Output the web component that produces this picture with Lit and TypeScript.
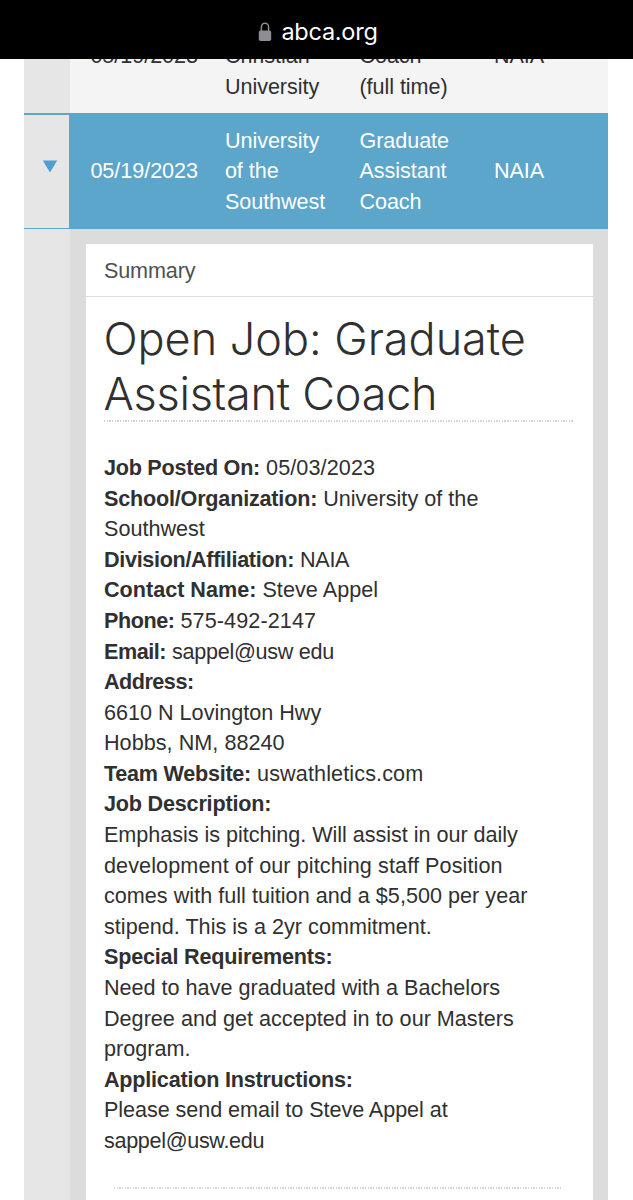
import { LitElement, html, css, svg } from "lit";
import { customElement } from "lit/decorators.js";
import { styleMap } from "lit/directives/style-map.js";

/* labelTrack and track are letter spacings in px for the label and the text. */
type Line = { label?: string; text?: string; labelTrack?: number; track?: number };

const lines: Line[] = [
  { label: "Job Posted On:", text: "05/03/2023", labelTrack: -0.25, track: 0.1 },
  { label: "School/Organization:", text: "University of the", track: 0.03 },
  { text: "Southwest" },
  { label: "Division/Affiliation:", text: "NAIA", labelTrack: -0.32, track: -0.3 },
  { label: "Contact Name:", text: "Steve Appel", labelTrack: 0, track: 0.05 },
  { label: "Phone:", text: "575-492-2147", labelTrack: -0.45, track: 0.1 },
  { label: "Email:", text: "sappel@usw edu", labelTrack: -0.45, track: -0.3 },
  { label: "Address:", labelTrack: -0.5 },
  { text: "6610 N Lovington Hwy" },
  { text: "Hobbs, NM, 88240", track: 0.04 },
  { label: "Team Website:", text: "uswathletics.com", labelTrack: -0.26, track: 0.12 },
  { label: "Job Description:" },
  { text: "Emphasis is pitching. Will assist in our daily", track: -0.03 },
  { text: "development of our pitching staff Position", track: 0.1 },
  { text: "comes with full tuition and a $5,500 per year", track: 0.02 },
  { text: "stipend. This is a 2yr commitment.", track: 0.02 },
  { label: "Special Requirements:" },
  { text: "Need to have graduated with a Bachelors" },
  { text: "Degree and get accepted in to our Masters", track: 0.01 },
  { text: "program." },
  { label: "Application Instructions:", labelTrack: -0.22 },
  { text: "Please send email to Steve Appel at", track: -0.06 },
  { text: "sappel@usw.edu", track: -0.33 },
];

const tracking = (px: number) => styleMap({ letterSpacing: `${px}px` });

const lock = svg`<path d="M3.4 9V5.2a3.6 4 0 0 1 7.2 0V9" fill="none" stroke="#8e8d92" stroke-width="1.5"/><rect x="0.8" y="8.6" width="12.4" height="10.4" rx="1.8" fill="#8e8d92"/>`;

@customElement("app-root")
export class AppRoot extends LitElement {
  static styles = css`
    :host {
      display: block;
      height: 1200px;
      overflow: hidden;
      background: #fff;
      color: #303030;
      font: 21.6px/30.6px "Liberation Sans", Arial, sans-serif;
    }
    .page { display: flex; flex-direction: column; height: 100%; }
    .bar {
      flex: none; height: 59px; box-sizing: border-box; padding: 4px 0 0 3px;
      background: #000; color: #fff;
      display: flex; align-items: center; justify-content: center; gap: 9px;
      font: 23.5px/30px Inter, sans-serif; letter-spacing: -0.25px;
    }
    .bar svg { width: 14px; height: 20px; }
    .table { flex: 1; min-height: 0; margin: 0 24.6px 0 24.4px; display: flex; flex-direction: column; }
    .row { flex: none; display: flex; }
    .side { flex: none; width: 46px; background: #e6e6e6; }
    .cells {
      flex: 1; display: grid; grid-template-columns: repeat(4, 134.5px);
      padding-left: 20px; white-space: nowrap;
    }
    .previous { height: 54px; overflow: hidden; align-items: flex-end; }
    .previous .side { height: 100%; }
    .previous .cells { background: #f4f4f4; padding-bottom: 11px; line-height: 30.4px; }
    .current { height: 116.4px; background: #5ba6ca; color: #fff; }
    .current .side {
      width: 44.5px; margin: 1.5px 0; display: flex; justify-content: center;
      align-items: center; box-sizing: border-box; padding: 0 0 10px 7px;
    }
    .current .side svg { width: 16px; height: 13px; }
    .current .cells { align-items: center; padding: 1px 0 0 21.5px; }
    .current .cells, .previous .cells { letter-spacing: -0.05px; }
    .detail { flex: 1; min-height: 0; display: flex; overflow: hidden; }
    .well { flex: 1; background: #dcdcdc; padding: 15px 15px 0 15.5px; display: flex; }
    .panel { flex: 1; background: #fff; }
    .tab {
      height: 52.2px; box-sizing: border-box; padding: 11.4px 18.1px; letter-spacing: -0.15px;
      border-bottom: 1px solid #ddd; color: #505050;
    }
    .content { padding: 14px 20px 0 18.1px; }
    h1 {
      margin: 0 0 0 -0.6px; font: 300 45px/55px Inter, sans-serif; color: #303030;
      white-space: nowrap; height: 109.7px; letter-spacing: -0.02px;
    }
    .second { letter-spacing: -0.25px; }
    b { letter-spacing: -0.2px; }
    .dotted {
      height: 2px;
      background: repeating-linear-gradient(90deg, #d4d4d4 0 1.33px, #fff 1.33px 2.67px);
    }
    .body { padding-top: 30.7px; white-space: nowrap; }
    .end { margin: 30px 10px 0; }
  `;

  private line(l: Line) {
    const label = l.label
      ? html`<b style=${tracking(l.labelTrack ?? -0.2)}>${l.label}</b> `
      : "";
    const text = l.text ? html`<span style=${tracking(l.track ?? 0)}>${l.text}</span>` : "";
    return html`<div>${label}${text}</div>`;
  }

  render() {
    return html`<div class="page">
      <header class="bar"><svg viewBox="0 0 14 20">${lock}</svg><span>abca.org</span></header>
      <main class="table">
        <div class="row previous">
          <div class="side"></div>
          <div class="cells">
            <div>05/19/2023</div>
            <div>Christian<br />University</div>
            <div>Coach<br />(full time)</div>
            <div>NAIA</div>
          </div>
        </div>
        <div class="row current">
          <div class="side"><svg viewBox="0 0 16 13"><path d="M0.8 0.5H15.2L8 12.5Z" fill="#4d9fd2" /></svg></div>
          <div class="cells">
            <div>05/19/2023</div>
            <div>University<br />of the<br />Southwest</div>
            <div>Graduate<br />Assistant<br />Coach</div>
            <div>NAIA</div>
          </div>
        </div>
        <div class="detail">
          <div class="side"></div>
          <div class="well">
            <section class="panel">
              <div class="tab">Summary</div>
              <div class="content">
                <h1>Open Job: Graduate<br /><span class="second">Assistant Coach</span></h1>
                <div class="dotted"></div>
                <div class="body">${lines.map((l) => this.line(l))}</div>
                <div class="dotted end"></div>
              </div>
            </section>
          </div>
        </div>
      </main>
    </div>`;
  }
}
